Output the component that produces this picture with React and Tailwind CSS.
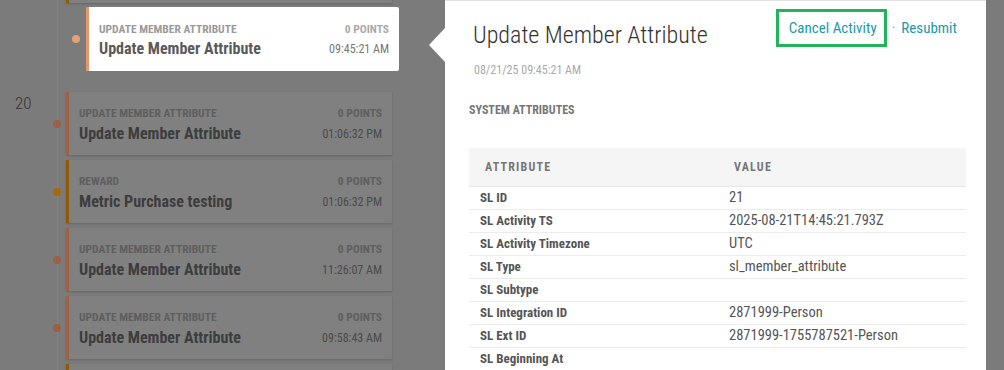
import React from 'react';

const dayItems = [
  { kind: 'Update Member Attribute', title: 'Update Member Attribute', time: '01:06:32 PM', bar: 'border-l-[#9a6246]', dot: 'bg-[#9b6045]' },
  { kind: 'Reward', title: 'Metric Purchase testing', time: '01:06:32 PM', bar: 'border-l-[#8f5a0a]', dot: 'bg-[#a8680a]' },
  { kind: 'Update Member Attribute', title: 'Update Member Attribute', time: '11:26:07 AM', bar: 'border-l-[#9a6246]', dot: 'bg-[#9b6045]' },
  { kind: 'Update Member Attribute', title: 'Update Member Attribute', time: '09:58:43 AM', bar: 'border-l-[#9a6246]', dot: 'bg-[#9b6045]' },
];

const attributes = [
  ['SL ID', '21'],
  ['SL Activity TS', '2025-08-21T14:45:21.793Z'],
  ['SL Activity Timezone', 'UTC'],
  ['SL Type', 'sl_member_attribute'],
  ['SL Subtype', ''],
  ['SL Integration ID', '2871999-Person'],
  ['SL Ext ID', '2871999-1755787521-Person'],
  ['SL Beginning At', ''],
];

const DimCard = ({ item }) => (
  <div
    className={`flex h-[63px] w-[326px] flex-col justify-center border-l-[3px] bg-[#808080] px-[10px] pt-[2px] shadow-[0_1px_2px_rgba(0,0,0,0.18)] ${item.bar}`}
  >
    <div className="flex items-center justify-between text-[11.5px] leading-[14px] font-bold uppercase text-[#5e5e5e]">
      <span>{item.kind}</span>
      <span>0 Points</span>
    </div>
    <div className="mt-[4px] flex items-center justify-between leading-[20px]">
      <span className="text-[16px] font-bold text-[#3d3d3d]">{item.title}</span>
      <span className="text-[12px] text-[#4a4a4a]">{item.time}</span>
    </div>
  </div>
);

const DimRow = ({ item, date }) => (
  <div className="flex items-center">
    <div className="w-[53px] shrink-0 self-start pl-[15px] pt-px text-[17px] leading-[20px] font-light text-[#333]">
      {date}
    </div>
    <span className={`h-2 w-2 shrink-0 rounded-full ${item.dot}`} />
    <div className="ml-[5px]">
      <DimCard item={item} />
    </div>
  </div>
);

// card that sits mostly outside the visible area
const StubRow = ({ bar }) => (
  <div className="flex items-center">
    <div className="w-[53px] shrink-0" />
    <span className="h-2 w-2 shrink-0" />
    <div className={`ml-[5px] h-[63px] w-[326px] border-l-[3px] bg-[#808080] shadow-[0_1px_2px_rgba(0,0,0,0.18)] ${bar}`} />
  </div>
);

export default function App() {
  return (
    <div className="relative h-[370px] w-[1004px] overflow-hidden bg-[#7b7b7b] font-['Roboto',sans-serif] font-stretch-condensed">
      {/* timeline */}
      <div className="relative w-[445px]">
        <div className="absolute top-0 bottom-0 left-[57px] w-px bg-[#858585]" />
        <div className="relative -mt-[60px] flex flex-col">
          <StubRow bar="border-l-[#8f5a0a]" />

          <div className="mt-[4px] flex items-center">
            <div className="w-[72px] shrink-0" />
            <span className="h-2 w-2 shrink-0 rounded-full bg-[#e5a173]" />
            <div className="ml-[6px] flex h-[64px] w-[313px] flex-col justify-center rounded-r-[2px] border-l-[3px] border-l-[#e3976b] bg-white px-[10px] pt-[3px]">
              <div className="flex items-center justify-between text-[11.5px] leading-[14px] font-bold uppercase text-[#9a9a9a]">
                <span>Update Member Attribute</span>
                <span className="text-[#aaa]">0 Points</span>
              </div>
              <div className="mt-[3px] flex items-center justify-between leading-[20px]">
                <span className="text-[16px] font-bold text-[#5a5a5a]">Update Member Attribute</span>
                <span className="text-[12px] text-[#777]">09:45:21 AM</span>
              </div>
            </div>
          </div>

          <div className="mt-[21px] flex flex-col gap-[5px]">
            <DimRow item={dayItems[0]} date="20" />
            {dayItems.slice(1).map((item, i) => (
              <DimRow key={i} item={item} />
            ))}
            <StubRow bar="border-l-[#8f5a0a]" />
          </div>
        </div>
      </div>

      {/* detail panel */}
      <div className="absolute top-0 left-[445px] z-10 h-[370px] w-[541px] border-t border-[#e2e2e2] bg-white px-[24px]">
        <div className="absolute top-[27px] -left-[16px] h-0 w-0 border-y-[17px] border-r-[16px] border-y-transparent border-r-white" />

        <div className="flex items-start justify-between">
          <h1 className="mt-[19px] pl-[4px] text-[24px] leading-[30px] font-light text-[#333]">
            Update Member Attribute
          </h1>
          <div className="mt-[8px] mr-[5px] flex items-center text-[15px] text-[#1b9aa6]">
            <div className="flex h-[38px] items-center border-[3px] border-[#22b45b] pr-[7px] pl-[10px]">
              Cancel Activity
            </div>
            <span className="ml-[5px] text-[#999]">·</span>
            <span className="ml-[6px]">Resubmit</span>
          </div>
        </div>

        <div className="mt-[13px] pl-[5px] text-[12px] leading-[14px] text-[#aaa]">08/21/25 09:45:21 AM</div>

        <div className="mt-[26px] text-[12px] leading-[14px] font-bold text-[#777]">SYSTEM ATTRIBUTES</div>

        <table className="mt-[31px] w-[497px] border-collapse text-left">
          <thead>
            <tr className="h-[38px] border-b border-[#e6e6e6] bg-[#f5f5f5] text-[12px] font-bold tracking-[1.2px] text-[#777]">
              <th className="w-[249px] pl-[16px] font-bold">ATTRIBUTE</th>
              <th className="pl-[16px] font-bold">VALUE</th>
            </tr>
          </thead>
          <tbody>
            {attributes.map(([label, value]) => (
              <tr key={label} className="h-[23px] border-b border-[#ececec]">
                <td className="pl-[11px] text-[13px] leading-[16px] font-bold text-[#555]">{label}</td>
                <td className="pl-[11px] text-[14.5px] leading-[16px] text-[#555]">{value}</td>
              </tr>
            ))}
          </tbody>
        </table>
      </div>
    </div>
  );
}
